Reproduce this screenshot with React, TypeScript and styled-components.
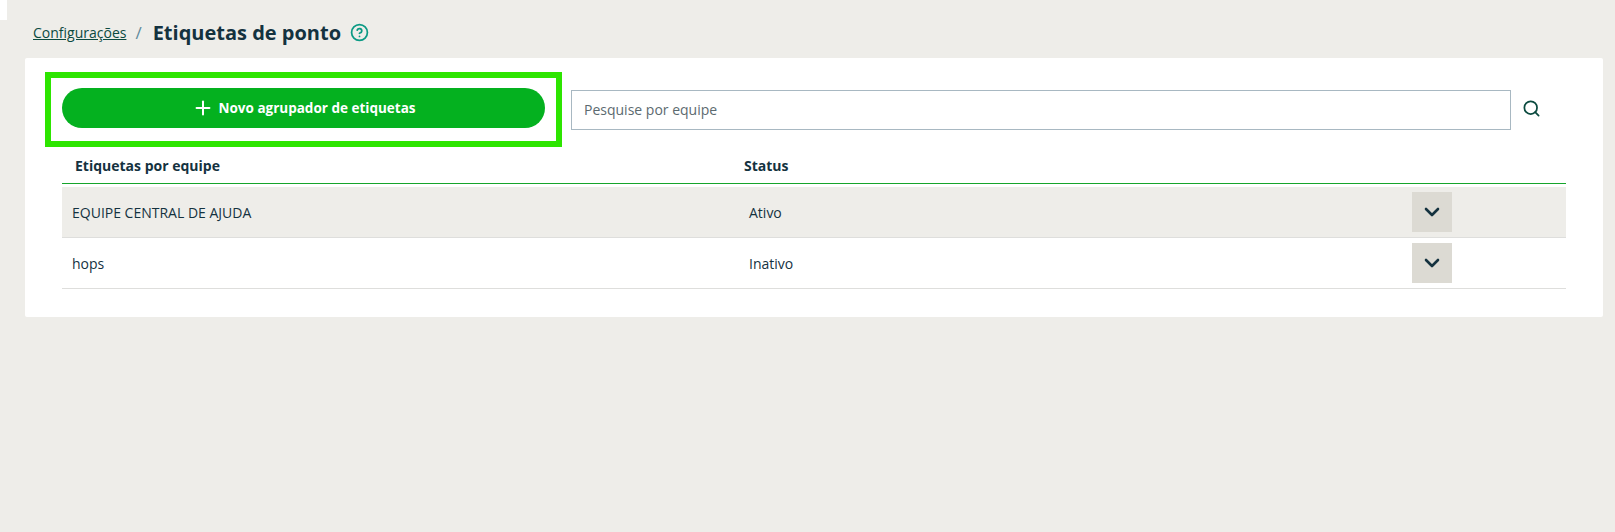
import React from "react";
import styled, { createGlobalStyle } from "styled-components";
import { Plus, Search, ChevronDown, CircleHelp } from "lucide-react";

const GlobalStyle = createGlobalStyle`
  html, body {
    margin: 0;
    padding: 0;
    background-color: #eeede9;
    font-family: "Open Sans", "Liberation Sans", sans-serif;
    color: #14323f;
  }
`;

const Page = styled.div`
  position: relative;
  height: 532px;
  overflow: hidden;
  padding: 18px 12px 0 25px;
  box-sizing: border-box;
`;

const CornerChip = styled.div`
  position: absolute;
  top: 0;
  left: 0;
  width: 7px;
  height: 20px;
  background-color: #ffffff;
`;

const Breadcrumb = styled.div`
  display: flex;
  align-items: center;
  height: 28px;
  margin-bottom: 12px;
  padding-left: 8px;
`;

const CrumbLink = styled.a`
  font-size: 14px;
  color: #0b4a3f;
  text-decoration: underline;
  cursor: pointer;
`;

const Slash = styled.span`
  font-size: 17px;
  color: #5f8a9c;
  margin: 0 11px 0 9px;
`;

const Title = styled.h1`
  margin: 0;
  font-size: 20px;
  font-weight: 700;
  color: #14323f;
`;

const HelpIcon = styled(CircleHelp)`
  width: 19px;
  height: 19px;
  margin-left: 9px;
  color: #0b9a84;
`;

const Card = styled.section`
  background-color: #ffffff;
  border-radius: 2px;
  height: 259px;
  padding: 14px 37px 0 20px;
  box-sizing: border-box;
`;

const Toolbar = styled.div`
  display: flex;
  align-items: center;
`;

const Highlight = styled.div`
  width: 517px;
  height: 75px;
  box-sizing: border-box;
  border: 6px solid #2de500;
  padding: 10px 11px;
  flex-shrink: 0;
`;

const NewButton = styled.button`
  display: flex;
  align-items: center;
  justify-content: center;
  gap: 5px;
  width: 100%;
  height: 40px;
  border: 0;
  border-radius: 20px;
  background-color: #04b11f;
  color: #ffffff;
  font-family: inherit;
  font-size: 13.5px;
  font-weight: 700;
`;

const SearchInput = styled.input`
  width: 940px;
  height: 40px;
  margin-left: 9px;
  box-sizing: border-box;
  border: 1px solid #a8b8c2;
  padding: 0 12px;
  font-family: inherit;
  font-size: 14px;
  color: #14323f;
  outline: none;

  &::placeholder {
    color: #5c6a70;
    opacity: 1;
  }
`;

const SearchButton = styled.span`
  display: flex;
  margin: -3px 0 0 11px;
  color: #0b4a3f;
`;

const Table = styled.div`
  margin: 0 0 0 17px;
`;

const HeaderRow = styled.div`
  display: grid;
  grid-template-columns: 669px 1fr;
  height: 36px;
  align-items: center;
  padding-left: 13px;
  border-bottom: 1px solid #15a52b;
  margin-bottom: 3px;
  font-size: 14px;
  font-weight: 700;
`;

const Row = styled.div<{ $shaded?: boolean }>`
  display: grid;
  grid-template-columns: 677px 663px 40px;
  align-items: center;
  height: 51px;
  box-sizing: border-box;
  padding-left: 10px;
  border-bottom: 1px solid #dededc;
  background-color: ${(props) => (props.$shaded ? "#eeede9" : "#ffffff")};
  font-size: 14px;
`;

const ToggleButton = styled.button`
  display: flex;
  align-items: center;
  justify-content: center;
  width: 40px;
  height: 40px;
  padding: 0;
  border: 0;
  background-color: #dcdad3;
  color: #14323f;
`;

const rows = [
  { name: "EQUIPE CENTRAL DE AJUDA", status: "Ativo" },
  { name: "hops", status: "Inativo" },
];

export default function App() {
  return (
    <Page>
      <GlobalStyle />
      <CornerChip />
      <Breadcrumb>
        <CrumbLink>Configurações</CrumbLink>
        <Slash>/</Slash>
        <Title>Etiquetas de ponto</Title>
        <HelpIcon strokeWidth={2.2} />
      </Breadcrumb>
      <Card>
        <Toolbar>
          <Highlight>
            <NewButton>
              <Plus size={22} strokeWidth={2.2} />
              Novo agrupador de etiquetas
            </NewButton>
          </Highlight>
          <SearchInput placeholder="Pesquise por equipe" />
          <SearchButton>
            <Search size={19} strokeWidth={2.2} />
          </SearchButton>
        </Toolbar>
        <Table>
          <HeaderRow>
            <span>Etiquetas por equipe</span>
            <span>Status</span>
          </HeaderRow>
          {rows.map((row, index) => (
            <Row key={row.name} $shaded={index === 0}>
              <span>{row.name}</span>
              <span>{row.status}</span>
              <ToggleButton>
                <ChevronDown size={24} strokeWidth={2.6} />
              </ToggleButton>
            </Row>
          ))}
        </Table>
      </Card>
    </Page>
  );
}
